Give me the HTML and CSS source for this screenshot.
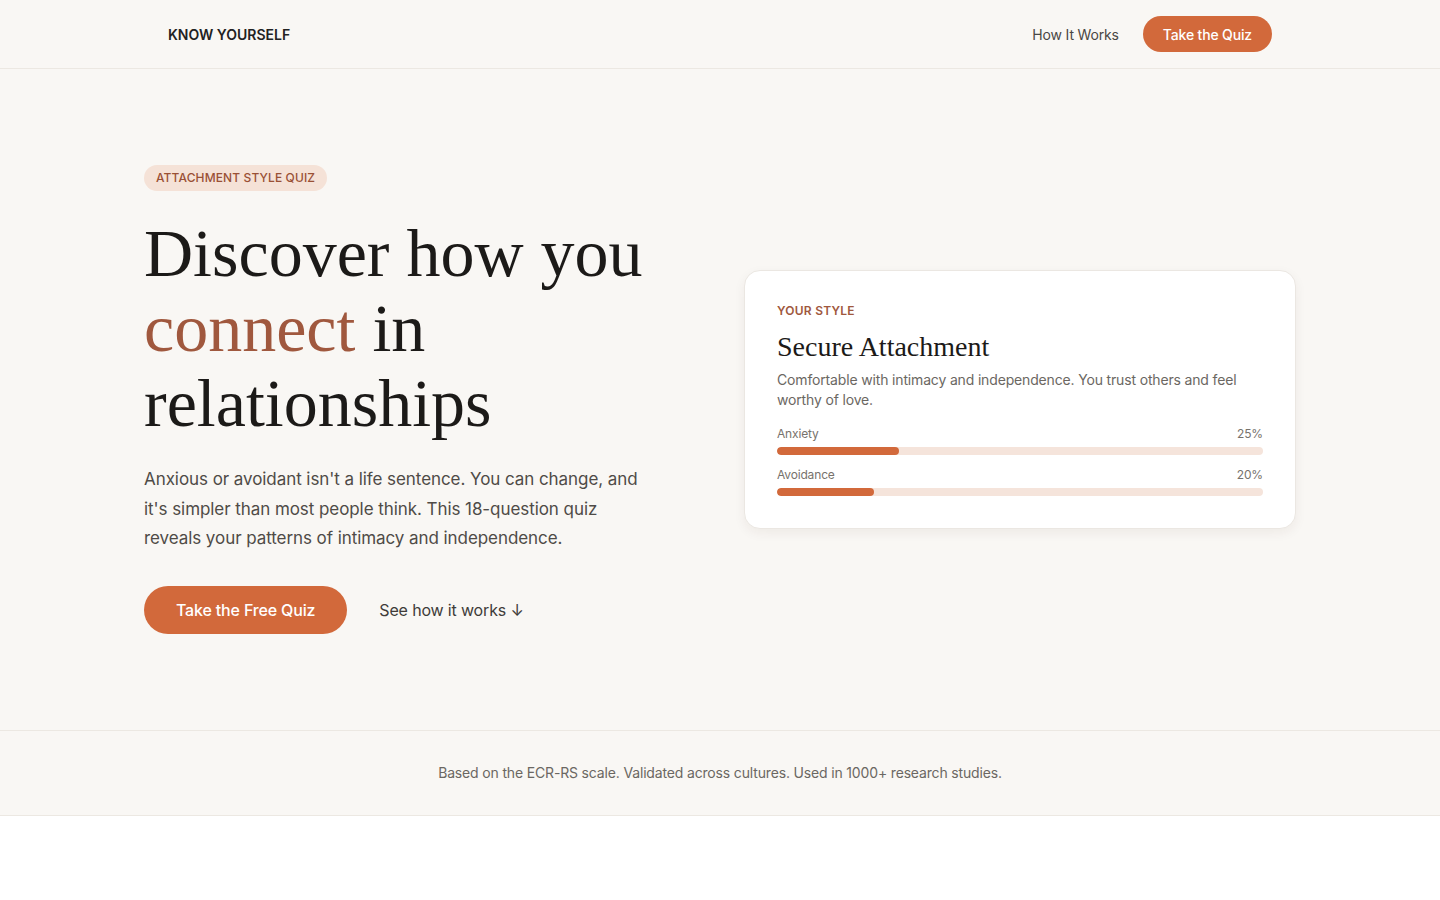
FILE: index.html
```html
<!DOCTYPE html>
<html lang="en">
<head>
<meta charset="utf-8">
<title>Know Yourself — Attachment Style Quiz</title>
<link rel="stylesheet" href="styles.css">
</head>
<body>
<div class="page">
  <header class="nav">
    <div class="nav-inner">
      <div class="logo">KNOW YOURSELF</div>
      <nav class="nav-links">
        <a class="nav-link" href="#how">How It Works</a>
        <a class="nav-btn" href="#quiz">Take the Quiz</a>
      </nav>
    </div>
  </header>

  <section class="hero">
    <div class="hero-inner">
      <div class="hero-left">
        <span class="badge">ATTACHMENT STYLE QUIZ</span>
        <h1 class="title">Discover how you <span class="accent">connect</span> in relationships</h1>
        <p class="lead">Anxious or avoidant isn't a life sentence. You can change, and it's simpler than most people think. This 18-question quiz reveals your patterns of intimacy and independence.</p>
        <div class="actions">
          <a class="cta" href="#quiz">Take the Free Quiz</a>
          <a class="link" href="#how">See how it works ↓</a>
        </div>
      </div>
      <div class="hero-right">
        <div class="card">
          <div class="card-eyebrow">YOUR STYLE</div>
          <h2 class="card-title">Secure Attachment</h2>
          <p class="card-text">Comfortable with intimacy and independence. You trust others and feel worthy of love.</p>
          <div class="meter">
            <div class="meter-head"><span>Anxiety</span><span>25%</span></div>
            <div class="track"><div class="fill" style="width:25%"></div></div>
          </div>
          <div class="meter">
            <div class="meter-head"><span>Avoidance</span><span>20%</span></div>
            <div class="track"><div class="fill" style="width:20%"></div></div>
          </div>
        </div>
      </div>
    </div>
  </section>

  <section class="proof">
    <p>Based on the ECR-RS scale. Validated across cultures. Used in 1000+ research studies.</p>
  </section>
</div>
</body>
</html>
```

FILE: styles.css
```css
* { box-sizing: border-box; }
html, body { margin: 0; padding: 0; }
body {
  background: #ffffff;
  font-family: Inter, "Liberation Sans", sans-serif;
  letter-spacing: -0.01em;
  color: #1c1a18;
}
a { text-decoration: none; }

.page { background: #f9f7f4; }

.nav {
  height: 69px;
  border-bottom: 1px solid #ece8e2;
}
.nav-inner {
  max-width: 1152px;
  margin: 0 auto;
  height: 68px;
  padding: 0 24px;
  display: flex;
  align-items: center;
  justify-content: space-between;
}
.logo {
  font-size: 14px;
  font-weight: 600;
  letter-spacing: 0;
  color: #222;
}
.nav-links {
  display: flex;
  align-items: center;
  gap: 24px;
}
.nav-link {
  font-size: 14px;
  color: #4a4744;
}
.nav-btn {
  display: inline-flex;
  align-items: center;
  height: 36px;
  padding: 0 20px;
  border-radius: 18px;
  background: #d2693b;
  color: #fff;
  font-size: 14px;
  font-weight: 500;
}

.hero {
  padding: 96px 0 96px;
  border-bottom: 1px solid #ece8e2;
}
.hero-inner {
  max-width: 1152px;
  margin: 0 auto;
  display: grid;
  grid-template-columns: 1fr 1fr;
  gap: 48px;
  align-items: center;
}
.badge {
  display: inline-block;
  padding: 5px 12px;
  border-radius: 13px;
  background: #f5e2d7;
  color: #9a5035;
  font-size: 12px;
  font-weight: 500;
  letter-spacing: 0.01em;
  line-height: 16px;
}
.title {
  margin: 25px 0 0;
  font-family: "Liberation Serif", "Times New Roman", serif;
  font-weight: 400;
  font-size: 68px;
  line-height: 75px;
  color: #1c1a18;
  letter-spacing: 0;
}
.accent {
  color: #a0583e;
}
.lead {
  margin: 24px 0 0;
  max-width: 500px;
  font-size: 17px;
  letter-spacing: -0.004em;
  line-height: 29.5px;
  color: #4f4b47;
}
.actions {
  margin-top: 32px;
  display: flex;
  align-items: center;
  gap: 32px;
}
.cta {
  display: inline-flex;
  align-items: center;
  height: 48px;
  padding: 0 32px;
  border-radius: 24px;
  background: #d2693b;
  color: #fff;
  font-size: 16px;
  font-weight: 500;
}
.link {
  font-size: 16px;
  font-weight: 400;
  color: #3f3c39;
}

.card {
  background: #fff;
  border: 1px solid #ebe7e2;
  border-radius: 16px;
  padding: 32px;
  box-shadow: 0 4px 12px rgba(60, 40, 20, 0.06);
}
.card-eyebrow {
  font-size: 12px;
  font-weight: 600;
  letter-spacing: 0.02em;
  color: #a0583e;
  line-height: 16px;
}
.card-title {
  margin: 11px 0 0;
  font-family: "Liberation Serif", "Times New Roman", serif;
  font-weight: 400;
  font-size: 28px;
  line-height: 34px;
  color: #1c1a18;
  letter-spacing: 0;
}
.card-text {
  margin: 6px 0 0;
  font-size: 14px;
  line-height: 20px;
  color: #6b6762;
}
.meter { margin-top: 16px; }
.meter + .meter { margin-top: 12px; }
.meter-head {
  display: flex;
  justify-content: space-between;
  font-size: 12px;
  line-height: 16px;
  color: #77726c;
}
.track {
  margin-top: 5px;
  height: 8px;
  border-radius: 4px;
  background: #f5e4db;
  overflow: hidden;
}
.fill {
  height: 100%;
  border-radius: 4px;
  background: #d2693b;
}

.proof {
  padding: 32px 0;
  border-bottom: 1px solid #ece8e2;
  text-align: center;
}
.proof p {
  margin: 0;
  font-size: 14px;
  line-height: 20px;
  color: #6b6762;
}
```
